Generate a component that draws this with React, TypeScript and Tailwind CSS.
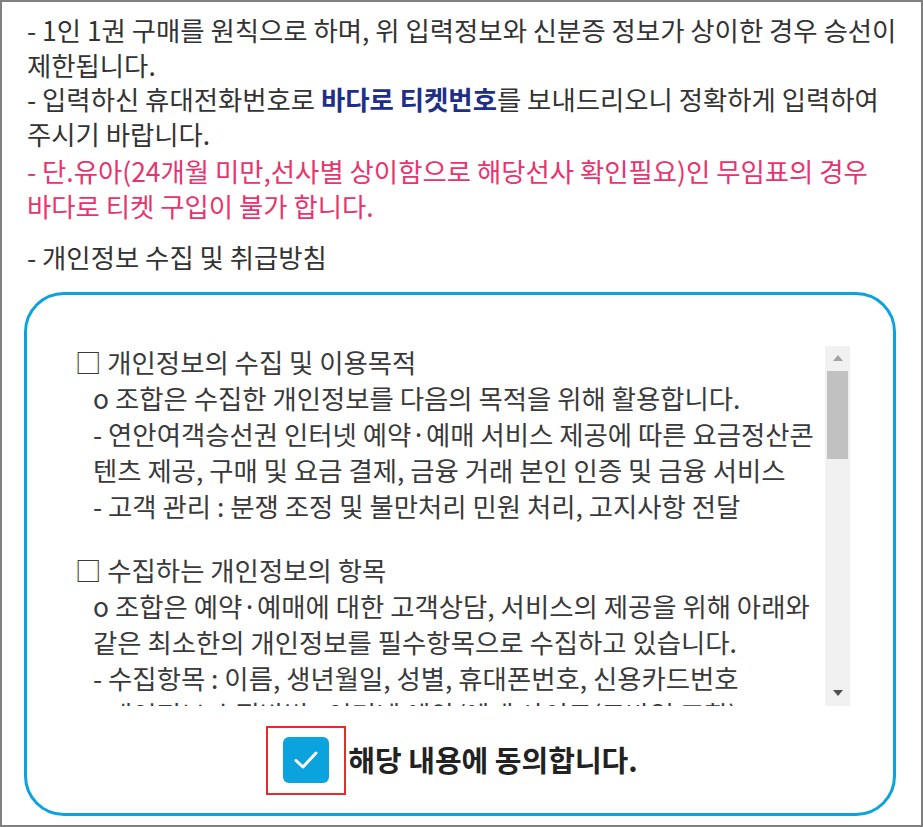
import React from "react";

const font = { fontFamily: '"Noto Sans CJK KR", "Noto Sans", sans-serif' };

// 약관 본문 (스크롤 영역)
const sections = [
  {
    title: "□ 개인정보의 수집 및 이용목적",
    lines: [
      "o 조합은 수집한 개인정보를 다음의 목적을 위해 활용합니다.",
      "- 연안여객승선권 인터넷 예약·예매 서비스 제공에 따른 요금정산콘",
      "텐츠 제공, 구매 및 요금 결제, 금융 거래 본인 인증 및 금융 서비스",
      "- 고객 관리 : 분쟁 조정 및 불만처리 민원 처리, 고지사항 전달",
    ],
  },
  {
    title: "□ 수집하는 개인정보의 항목",
    lines: [
      "o 조합은 예약·예매에 대한 고객상담, 서비스의 제공을 위해 아래와",
      "같은 최소한의 개인정보를 필수항목으로 수집하고 있습니다.",
      "- 수집항목 : 이름, 생년월일, 성별, 휴대폰번호, 신용카드번호",
      "- 개인정보 수집방법 : 인터넷 예약/예매 사이트(모바일 포함)",
    ],
  },
];

const FakeScrollbar: React.FC = () => (
  <div className="w-[25px] h-[360px] mt-[4px] bg-[#f1f1f1] flex flex-col items-center shrink-0">
    <div className="h-[25px] flex items-center justify-center">
      <svg width="10" height="6" viewBox="0 0 10 6">
        <path d="M0 6 L5 0 L10 6 Z" fill="#a3a3a3" />
      </svg>
    </div>
    <div className="w-[21px] h-[88px] bg-[#c1c1c1]" />
    <div className="flex-1" />
    <div className="h-[25px] flex items-center justify-center">
      <svg width="10" height="6" viewBox="0 0 10 6">
        <path d="M0 0 L10 0 L5 6 Z" fill="#505050" />
      </svg>
    </div>
  </div>
);

export default function App() {
  return (
    <div
      className="w-[923px] h-[827px] border-2 border-[#808080] bg-white overflow-hidden text-[#333333]"
      style={font}
    >
      {/* 안내 문구 */}
      <div className="pl-[25px] pt-[11px] text-[26.4px] leading-[34.5px] whitespace-nowrap">
        <div>- 1인 1권 구매를 원칙으로 하며, 위 입력정보와 신분증 정보가 상이한 경우 승선이</div>
        <div>제한됩니다.</div>
        <div>
          - 입력하신 휴대전화번호로 <strong className="font-bold text-[#1e2f8a]">바다로 티켓번호</strong>를 보내드리오니 정확하게 입력하여
        </div>
        <div>주시기 바랍니다.</div>
        <div className="mt-[3px] text-[#e8336e]">- 단.유아(24개월 미만,선사별 상이함으로 해당선사 확인필요)인 무임표의 경우</div>
        <div className="text-[#e8336e]">바다로 티켓 구입이 불가 합니다.</div>
        <div className="mt-[17px]">- 개인정보 수집 및 취급방침</div>
      </div>

      {/* 개인정보 동의 박스 */}
      <div className="ml-[22px] mt-[17px] w-[872px] h-[524px] border-[3px] border-[#0aa3de] rounded-[40px] flex flex-col">
        <div className="mt-[47px] ml-[23px] flex h-[364px]">
          <div className="flex-1 h-[364px] overflow-hidden pl-[25px] pt-[2px] text-[26.4px] leading-[36px] text-[#3a3a3a] whitespace-nowrap">
            {sections.map((s, i) => (
              <div key={s.title} className={i > 0 ? "mt-[28px]" : ""}>
                <div>{s.title}</div>
                <div className="pl-[18px]">
                  {s.lines.map((l) => (
                    <div key={l}>{l}</div>
                  ))}
                </div>
              </div>
            ))}
          </div>
          <FakeScrollbar />
          <div className="w-[43px]" />
        </div>

        <div className="mt-[20px] flex items-center justify-center pr-[16px]">
          <label className="flex items-center gap-[2px] cursor-pointer">
            <span className="w-[80px] h-[69px] border-2 border-[#e52b2b] flex items-center justify-center">
              <span className="w-[46px] h-[46px] rounded-[6px] bg-[#0aa3de] flex items-center justify-center">
                <svg width="24" height="20" viewBox="0 0 24 20" fill="none">
                  <path d="M2 10.5 L9 17 L22 3" stroke="white" strokeWidth="3" strokeLinecap="round" strokeLinejoin="round" />
                </svg>
              </span>
            </span>
            <span className="text-[29px] font-bold text-[#222222]">해당 내용에 동의합니다.</span>
          </label>
        </div>
      </div>
    </div>
  );
}
